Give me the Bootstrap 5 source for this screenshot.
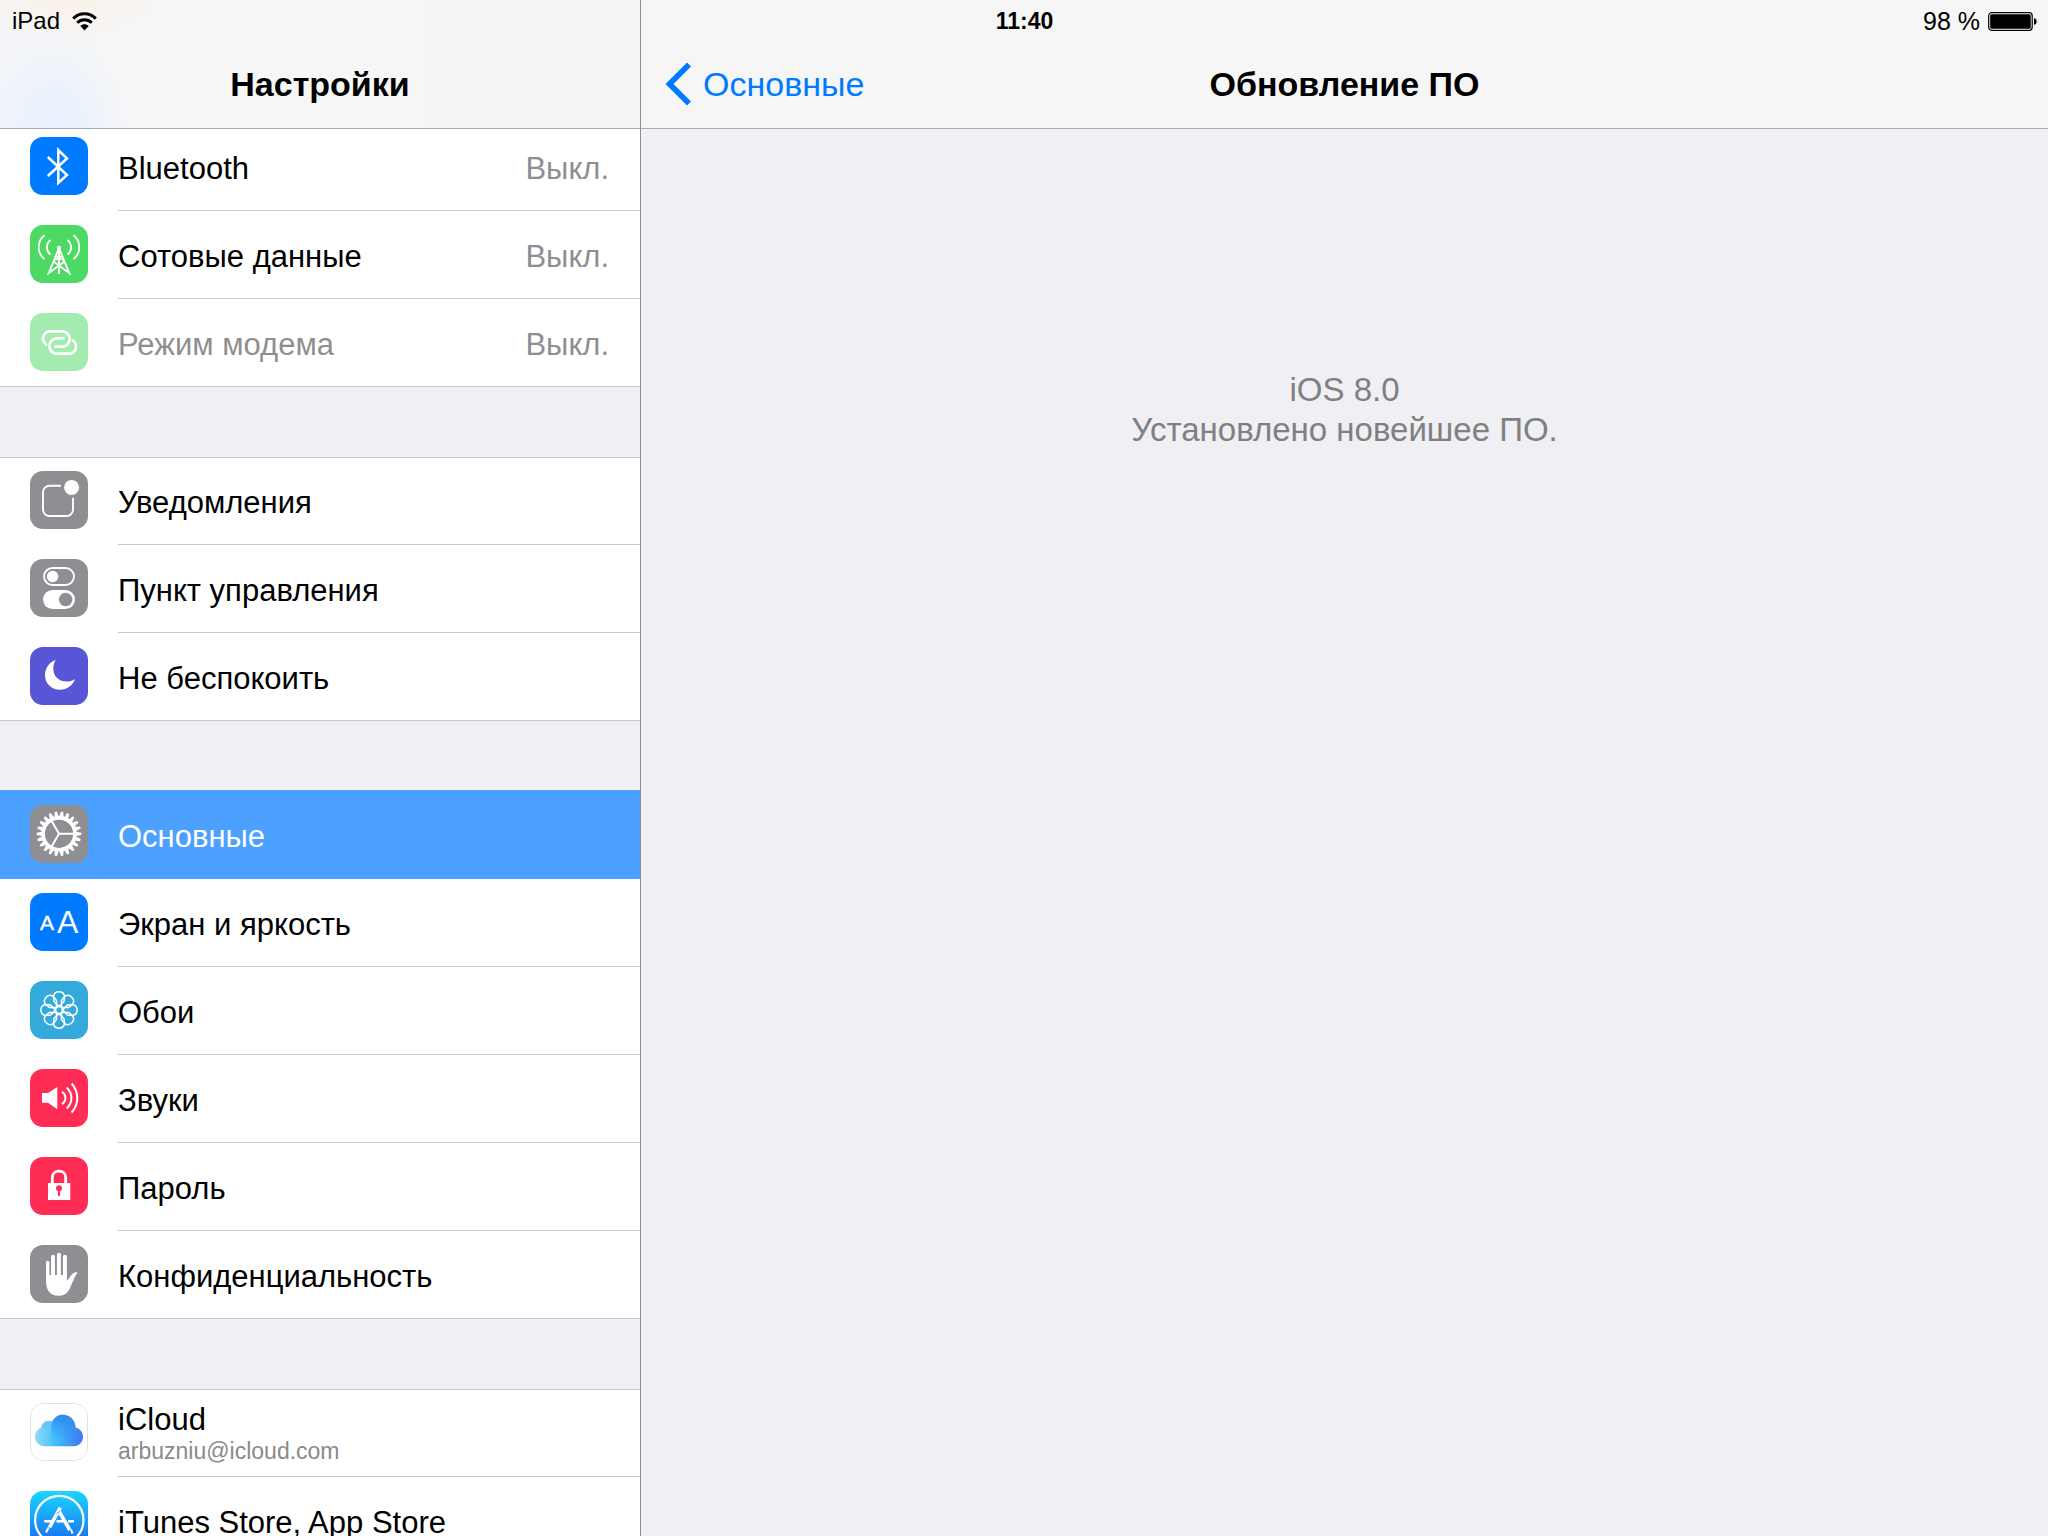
<!DOCTYPE html>
<html lang="ru">
<head>
<meta charset="utf-8">
<meta name="viewport" content="width=device-width, initial-scale=1">
<title>Настройки</title>
<link rel="stylesheet" href="https://cdn.jsdelivr.net/npm/bootstrap@5.3.0/dist/css/bootstrap.min.css">
<style>
body { font-family: "Liberation Sans", Arial, sans-serif; background: #efeff4; color: #000; }
a { text-decoration: none; }
.status-line { height: 42px; padding: 0 11px 0 12px; font-size: 24px; line-height: 42px; z-index: 3; }
.status-side { flex: 1 1 0; gap: 12px; }
.status-power { gap: 8px; font-size: 25px; }
.status-clock { font-size: 23px; font-weight: 700; }
.side-pane { flex: 0 0 31.3%; border-right: 1px solid #8e8e93; }
.top-bar { height: 129px; flex: none; padding-top: 40px; border-bottom: 1px solid #acacb0; background: #f6f6f6; z-index: 2; }
.side-pane .top-bar {
  background:
    radial-gradient(ellipse 75px 95px at 55px 125px, #e8f1fd 15%, #e8f1fd00 100%),
    radial-gradient(ellipse 110px 40px at 65px 0, #f9f2ea 10%, #f9f2ea00 100%),
    linear-gradient(90deg, #f4f5f8, #f7f7f7 25%, #f5f5f5);
}
.bar-title { font-size: 34px; line-height: 40px; margin: 0; font-weight: 700; }
.back-link { font-size: 34px; line-height: 40px; color: #007aff; gap: 11px; padding-left: 24px; }
.bar-cell { flex: 1 1 0; }
.scroll-area { margin-top: -6px; gap: 70px; }
.set-group { background: #fff; box-shadow: inset 0 1px #c8c7cc, inset 0 -1px #c8c7cc; }
.set-row { padding-left: 30px; gap: 30px; color: #000; font-size: 31px; line-height: 36px; }
.set-row > svg { flex: none; width: 58px; height: 58px; margin-top: 14px; border-radius: 13px; }
.set-body { min-height: 88px; padding: 4px 31px 0 0; border-bottom: 1px solid #c8c7cc; }
.set-body.flex-column { padding-top: 0; }
.set-row:last-child .set-body { border-color: transparent; }
.set-row.chosen { background: #4ca0ff; box-shadow: 0 -1px #4ca0ff; color: #fff; }
.chosen .set-body { border-color: transparent; }
.set-value { color: #8e8e93; }
.set-row.off { color: #8f8f8f; }
.off > svg { opacity: .5; }
.set-note { font-size: 23px; line-height: 26px; color: #8a8a8a; }
.notice { margin-top: 241px; font-size: 33px; line-height: 40px; color: #808080; }
</style>
<script src="https://cdn.jsdelivr.net/npm/bootstrap@5.3.0/dist/js/bootstrap.bundle.min.js"></script>
</head>
<body>
<div class="vh-100 d-flex overflow-hidden position-relative">

  <div class="status-line position-absolute top-0 start-0 w-100 d-flex">
    <div class="status-side d-flex align-items-center">
      <span>iPad</span>
      <svg width="25" height="19" viewBox="0 0 25 19" role="img" aria-label="Wi-Fi"><g fill="none" stroke="#000" stroke-width="3"><path d="M1.200 6.600C7.500.200 17.500.200 23.800 6.600"/><path d="M5.200 10.800C9.300 6.800 15.700 6.800 19.800 10.800"/></g><path d="M8.300 14C10.700 11.800 14.300 11.800 16.700 14L12.500 18.600Z"/></svg>
    </div>
    <div class="status-clock">11:40</div>
    <div class="status-side status-power d-flex align-items-center justify-content-end">
      <span>98 %</span>
      <svg width="49" height="19" viewBox="0 0 49 19" role="img" aria-label="Аккумулятор"><rect x=".7" y=".7" width="43.500" height="17.600" rx="3" fill="none" stroke="#000" stroke-width="1.200"/><rect x="2.200" y="2.200" width="40.500" height="14.600" rx="1.500"/><path d="M46 6.200C49.500 6.200 49.500 12.800 46 12.800Z"/></svg>
    </div>
  </div>

  <aside class="side-pane d-flex flex-column overflow-hidden">
    <header class="top-bar d-flex align-items-center justify-content-center position-relative">
      <h1 class="bar-title">Настройки</h1>
    </header>
    <nav class="scroll-area d-flex flex-column" aria-label="Разделы">
      <div class="set-group">
        <a href="#bluetooth" class="set-row d-flex">
          <svg viewBox="0 0 58 58" aria-hidden="true"><rect width="58" height="58" fill="#007aff"/><path d="M17.800 20L37 38L28.300 46V13L37 21.500L17.800 39" fill="none" stroke="#fff" stroke-width="2.500"/></svg>
          <span class="set-body flex-grow-1 d-flex align-items-center justify-content-between"><span>Bluetooth</span><span class="set-value">Выкл.</span></span>
        </a>
        <a href="#cellular" class="set-row d-flex">
          <svg viewBox="0 0 58 58" aria-hidden="true"><rect width="58" height="58" fill="#4cd964"/><g fill="none" stroke="#fff" stroke-width="1.900"><path d="M29 22V49M29 23L18.800 48L34.500 36.500M29 23L39.200 48L23.500 36.500M26 31L33 35M32 31L25 35"/><path d="M20.500 15C15.800 18.500 15.800 26 20.500 29.500M14.500 10.200C6.800 16 6.800 28.500 14.500 34M37.500 15C42.200 18.500 42.200 26 37.500 29.500M43.500 10.200C51.200 16 51.200 28.500 43.500 34"/></g><circle cx="29" cy="23" r="2.200" fill="#fff"/></svg>
          <span class="set-body flex-grow-1 d-flex align-items-center justify-content-between"><span>Сотовые данные</span><span class="set-value">Выкл.</span></span>
        </a>
        <a href="#hotspot" class="set-row off d-flex" aria-disabled="true">
          <svg viewBox="0 0 58 58" aria-hidden="true"><rect width="58" height="58" fill="#4cd964"/><g fill="none" stroke="#fff" stroke-width="2.700" stroke-linecap="round"><path d="M16 31.500C10.500 27 13 18.300 20.500 18.300H32A7.700 7.700 0 0 1 32 33.700H25.500"/><path d="M43 27.500C48.500 32 46 40.700 38.500 40.700H27A7.700 7.700 0 0 1 27 25.300H33.500"/></g></svg>
          <span class="set-body flex-grow-1 d-flex align-items-center justify-content-between"><span>Режим модема</span><span class="set-value">Выкл.</span></span>
        </a>
      </div>

      <div class="set-group">
        <a href="#notifications" class="set-row d-flex">
          <svg viewBox="0 0 58 58" aria-hidden="true"><rect width="58" height="58" fill="#8e8e93"/><path d="M31 14.700H19.500A6.500 6.500 0 0 0 13 21.200V38.500A6.500 6.500 0 0 0 19.500 45H36.500A6.500 6.500 0 0 0 43 38.500V26.700" fill="none" stroke="#fff" stroke-width="1.900"/><circle cx="41.600" cy="16.400" r="7.500" fill="#fff"/></svg>
          <span class="set-body flex-grow-1 d-flex align-items-center">Уведомления</span>
        </a>
        <a href="#control" class="set-row d-flex">
          <svg viewBox="0 0 58 58" aria-hidden="true"><rect width="58" height="58" fill="#8e8e93"/><rect x="14" y="9" width="30" height="17" rx="8.500" fill="none" stroke="#fff" stroke-width="1.800"/><circle cx="22.600" cy="17.500" r="5.700" fill="#fff"/><rect x="13" y="31" width="32" height="19" rx="9.500" fill="#fff"/><circle cx="35.600" cy="40.500" r="6.700" fill="#8e8e93"/></svg>
          <span class="set-body flex-grow-1 d-flex align-items-center">Пункт управления</span>
        </a>
        <a href="#dnd" class="set-row d-flex">
          <svg viewBox="0 0 58 58" aria-hidden="true"><rect width="58" height="58" fill="#5856d6"/><path d="M25.800 12.800C19 15.500 15 21.500 15 28C15 36.500 21.500 42.800 30 42.800C37 42.800 42.500 38.500 45.200 32C42 34 40 34.600 37 34.600C29 34.600 23.300 29.500 23.300 21.500C23.300 18.500 24 15.500 25.800 12.800Z" fill="#fff"/></svg>
          <span class="set-body flex-grow-1 d-flex align-items-center">Не беспокоить</span>
        </a>
      </div>

      <div class="set-group">
        <a href="#general" class="set-row chosen d-flex" aria-current="page">
          <svg viewBox="0 0 58 58" aria-hidden="true"><defs><path id="teeth" d="M16-2.400L22.300-1.100V1.100L16 2.400ZM-16-2.400L-22.300-1.100V1.100L-16 2.400Z"/></defs><rect width="58" height="58" fill="#8e8e93"/><g transform="translate(29 28.800)" fill="#fff"><circle r="15.900" fill="none" stroke="#fff" stroke-width="3.600"/><path d="M15 0H0L-7.500-13M0 0L-7.500 13" fill="none" stroke="#fff" stroke-width="2"/><use href="#teeth"/><use href="#teeth" transform="rotate(16.360)"/><use href="#teeth" transform="rotate(32.730)"/><use href="#teeth" transform="rotate(49.090)"/><use href="#teeth" transform="rotate(65.450)"/><use href="#teeth" transform="rotate(81.820)"/><use href="#teeth" transform="rotate(98.180)"/><use href="#teeth" transform="rotate(114.550)"/><use href="#teeth" transform="rotate(130.910)"/><use href="#teeth" transform="rotate(147.270)"/><use href="#teeth" transform="rotate(163.640)"/></g></svg>
          <span class="set-body flex-grow-1 d-flex align-items-center">Основные</span>
        </a>
        <a href="#display" class="set-row d-flex">
          <svg viewBox="0 0 58 58" aria-hidden="true" fill="#fff"><rect width="58" height="58" fill="#007aff"/><text x="10" y="37" font-size="21" stroke="#fff" stroke-width=".4">A</text><text x="27" y="40" font-size="32">A</text></svg>
          <span class="set-body flex-grow-1 d-flex align-items-center">Экран и яркость</span>
        </a>
        <a href="#wallpaper" class="set-row d-flex">
          <svg viewBox="0 0 58 58" aria-hidden="true"><defs><path id="petal" d="M0-3.600L-5-8.500L-5.600-13.500A5.700 5.700 0 0 1 5.600-13.500L5-8.500Z"/></defs><rect width="58" height="58" fill="#34aadc"/><g transform="translate(29 29)" fill="none" stroke="#fff" stroke-width="1.500"><circle r="3.400"/><use href="#petal"/><use href="#petal" transform="rotate(45)"/><use href="#petal" transform="rotate(90)"/><use href="#petal" transform="rotate(135)"/><use href="#petal" transform="rotate(180)"/><use href="#petal" transform="rotate(225)"/><use href="#petal" transform="rotate(270)"/><use href="#petal" transform="rotate(315)"/></g></svg>
          <span class="set-body flex-grow-1 d-flex align-items-center">Обои</span>
        </a>
        <a href="#sounds" class="set-row d-flex">
          <svg viewBox="0 0 58 58" aria-hidden="true"><rect width="58" height="58" fill="#ff2d55"/><path d="M12 24H18L27.300 18V40.300L18 33.700H12Z" fill="#fff"/><path d="M32 22.800C36.600 26 36.600 32 32 35.300M36.600 18.500C43 24.500 43 33.500 36.600 39.600M41.600 14.500C49.200 23 49.200 35 41.600 43.500" fill="none" stroke="#fff" stroke-width="2"/></svg>
          <span class="set-body flex-grow-1 d-flex align-items-center">Звуки</span>
        </a>
        <a href="#passcode" class="set-row d-flex">
          <svg viewBox="0 0 58 58" aria-hidden="true"><rect width="58" height="58" fill="#ff2d55"/><path d="M22.300 27V20.500C22.300 12 35.700 12 35.700 20.500V27" fill="none" stroke="#fff" stroke-width="2.800"/><rect x="18" y="26" width="22.300" height="17" fill="#fff"/><circle cx="29" cy="31.200" r="3" fill="#ff2d55"/><rect x="28" y="32" width="2" height="7" fill="#ff2d55"/></svg>
          <span class="set-body flex-grow-1 d-flex align-items-center">Пароль</span>
        </a>
        <a href="#privacy" class="set-row d-flex">
          <svg viewBox="0 0 58 58" aria-hidden="true"><rect width="58" height="58" fill="#8e8e93"/><g fill="none" stroke="#fff" stroke-linecap="round"><path d="M17.700 17.500V32" stroke-width="3.400"/><path d="M23 11.700V32M28.900 9.700V32M34.900 11.700V32" stroke-width="4"/></g><path d="M16 30H36.900V36L41 30.500C43 27.800 45.500 26.700 47.400 27.400C47.200 28.600 46 29.600 44.800 32L40 43C38 48 34 50.800 28.500 50.800C20 50.800 16 45 16 36Z" fill="#fff"/></svg>
          <span class="set-body flex-grow-1 d-flex align-items-center">Конфиденциальность</span>
        </a>
      </div>

      <div class="set-group">
        <a href="#icloud" class="set-row d-flex">
          <svg viewBox="0 0 58 58" aria-hidden="true"><defs><linearGradient id="cloud" gradientUnits="userSpaceOnUse" x1="5" y1="32" x2="53" y2="36"><stop offset="0" stop-color="#90dcf8"/><stop offset=".45" stop-color="#40bcfc"/><stop offset="1" stop-color="#3f74f0"/></linearGradient><linearGradient id="puff" x1="0" y1="0" x2="0" y2="1"><stop offset="0" stop-color="#2f8cee"/><stop offset="1" stop-color="#2f8cee" stop-opacity="0"/></linearGradient></defs><rect x=".5" y=".5" width="57" height="57" rx="12.500" fill="#fff" stroke="#e2e2e4"/><path d="M15 43.200C9 43.200 5 39 5 33.800C5 29.500 7.500 26 11.300 24.700C11.800 19.500 17.500 16.200 22.300 18.600C24.500 14.300 28.200 11.800 32.800 11.800C39.500 11.800 45.300 17 45.500 24.500C50 25.500 53 29.300 53 33.800C53 39 49 43.200 44 43.200Z" fill="url(#cloud)"/><path d="M22.300 18.600C24.500 14.300 28.200 11.800 32.800 11.800C39.500 11.800 45.300 17 45.500 24.500V36H22C20.500 30 20.500 24 22.300 18.600Z" fill="url(#puff)"/><path d="M11.300 24.700C11.800 19.500 17.500 16.200 22.300 18.600C21.500 21 21 23 21.400 26Z" fill="#69c5f2" opacity=".7"/></svg>
          <span class="set-body flex-grow-1 d-flex flex-column justify-content-center"><span>iCloud</span><span class="set-note">arbuzniu@icloud.com</span></span>
        </a>
        <a href="#stores" class="set-row d-flex">
          <svg viewBox="0 0 58 58" aria-hidden="true"><defs><linearGradient id="store" x1="0" y1="0" x2="0" y2="1"><stop offset="0" stop-color="#1ad6fd"/><stop offset="1" stop-color="#1d62f0"/></linearGradient></defs><rect width="58" height="58" fill="url(#store)"/><g fill="none" stroke="#fff"><circle cx="29.300" cy="29" r="24.200" stroke-width="2.200"/><path d="M30.300 16.500L19.500 36.500M28 18.500L39.800 39" stroke-width="3.600"/><path d="M18.600 36.500L16 41.500M41 38.500L42.500 42.500" stroke-width="2"/><path d="M14.300 30.200H22M26.500 30.200H33M38 30.200H44" stroke-width="2.400"/></g><path d="M26.500 22.500L30 20.500" stroke="#1cb0fa" stroke-width="1"/></svg>
          <span class="set-body flex-grow-1 d-flex align-items-center">iTunes Store, App Store</span>
        </a>
      </div>
    </nav>
  </aside>

  <main class="flex-grow-1 d-flex flex-column">
    <header class="top-bar d-flex align-items-center">
      <div class="bar-cell d-flex">
        <a href="#general" class="back-link d-flex align-items-center">
          <svg width="27" height="44" viewBox="0 0 27 44" aria-hidden="true"><path d="M24 2.500L4.500 22L24 41.500" fill="none" stroke="#007aff" stroke-width="5.600"/></svg>
          <span>Основные</span>
        </a>
      </div>
      <h2 class="bar-title">Обновление ПО</h2>
      <div class="bar-cell"></div>
    </header>
    <p class="notice text-center mb-0">iOS 8.0<br>Установлено новейшее ПО.</p>
  </main>
</div>
</body>
</html>
